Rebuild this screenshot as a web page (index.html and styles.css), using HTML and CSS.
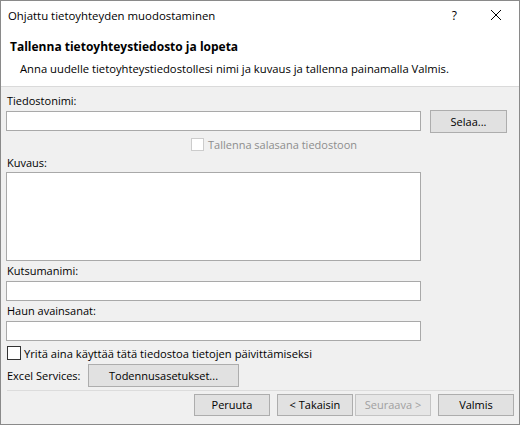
FILE: index.html
```html
<!DOCTYPE html>
<html>
<head>
<meta charset="utf-8">
<link rel="stylesheet" href="styles.css">
</head>
<body>
<div class="window">
  <div class="titlebar">
    <span class="title">Ohjattu tietoyhteyden muodostaminen</span>
    <span class="help">?</span>
    <svg class="close" width="12" height="12" viewBox="0 0 12 12"><path d="M1 1 L11 11 M11 1 L1 11" stroke="#000" stroke-width="1" fill="none"/></svg>
  </div>
  <div class="header">
    <div class="heading">Tallenna tietoyhteystiedosto ja lopeta</div>
    <div class="subtitle">Anna uudelle tietoyhteystiedostollesi nimi ja kuvaus ja tallenna painamalla Valmis.</div>
  </div>
  <div class="content">
    <div class="label l-file">Tiedostonimi:</div>
    <div class="row-file">
      <div class="input"></div>
      <div class="btn btn-browse">Selaa...</div>
    </div>
    <div class="row-pass">
      <span class="check disabled"></span>
      <span class="pass-text">Tallenna salasana tiedostoon</span>
    </div>
    <div class="label">Kuvaus:</div>
    <div class="textarea"></div>
    <div class="label l-after">Kutsumanimi:</div>
    <div class="input single"></div>
    <div class="label l-after2">Haun avainsanat:</div>
    <div class="input single"></div>
    <div class="row-always">
      <span class="check"></span>
      <span class="always-text">Yritä aina käyttää tätä tiedostoa tietojen päivittämiseksi</span>
    </div>
    <div class="row-excel">
      <span class="excel-label">Excel Services:</span>
      <div class="btn btn-auth">Todennusasetukset...</div>
    </div>
  </div>
  <div class="separator"></div>
  <div class="footer">
    <div class="btn fbtn">Peruuta</div>
    <div class="btn fbtn back">&lt; Takaisin</div>
    <div class="btn fbtn next disabled">Seuraava &gt;</div>
    <div class="btn fbtn finish">Valmis</div>
  </div>
</div>
</body>
</html>
```

FILE: styles.css
```css
html, body {
  margin: 0;
  padding: 0;
}
body {
  font-family: "Open Sans", "Noto Sans", sans-serif;
  font-size: 11px;
  color: #000;
  background: #fff;
}
.window {
  width: 520px;
  height: 425px;
  box-sizing: border-box;
  border: 1px solid #8a8a8a;
  background: #f0f0f0;
  display: flex;
  flex-direction: column;
}
.titlebar {
  height: 28px;
  background: #fff;
  display: flex;
  align-items: center;
  padding-left: 7px;
}
.title {
  flex: 1;
  font-size: 11.4px;
}
.help {
  font-size: 12px;
  margin-right: 33px;
}
.close {
  margin-right: 17px;
}
.header {
  height: 57px;
  background: #fff;
  border-bottom: 1px solid #dadada;
  padding-left: 9px;
}
.heading {
  font-weight: bold;
  font-size: 12px;
  margin-top: 9px;
  line-height: 18px;
}
.subtitle {
  margin-top: 5px;
  margin-left: 10px;
  line-height: 16px;
  font-size: 11.25px;
}
.content {
  padding-left: 5px;
  display: flex;
  flex-direction: column;
}
.label {
  line-height: 16px;
  height: 16px;
  padding-left: 1px;
}
.l-file {
  margin-top: 6px;
}
.row-file {
  display: flex;
  align-items: flex-start;
  margin-top: 1px;
}
.input {
  width: 415px;
  height: 20px;
  box-sizing: border-box;
  background: #fff;
  border: 1px solid #a9a9a9;
}
.row-file .input {
  margin-top: 1px;
}
.single {
  margin-top: 2px;
}
.btn {
  box-sizing: border-box;
  background: #e1e1e1;
  border: 1px solid #adadad;
  display: flex;
  align-items: center;
  justify-content: center;
  line-height: 16px;
}
.btn-browse {
  width: 77px;
  height: 23px;
  margin-left: 9px;
}
.row-pass {
  display: flex;
  align-items: center;
  height: 18px;
  margin-top: 2px;
  padding-left: 185px;
}
.check {
  width: 13px;
  height: 13px;
  box-sizing: border-box;
  border: 1px solid #333;
  background: #fff;
  display: inline-block;
  margin-right: 4px;
}
.check.disabled {
  border-color: #cccccc;
}
.pass-text {
  color: #8d8d8d;
}
.row-pass + .label {
  margin-top: 2px;
}
.textarea {
  width: 415px;
  height: 89px;
  box-sizing: border-box;
  background: #fff;
  border: 1px solid #a9a9a9;
  margin-top: 1px;
}
.l-after {
  margin-top: 2px;
}
.l-after2 {
  margin-top: 2px;
}
.row-always {
  display: flex;
  align-items: center;
  height: 16px;
  margin-top: 4px;
  padding-left: 1px;
}
.row-always .check {
  width: 14px;
  height: 14px;
  margin-right: 3px;
}
.always-text {
  font-size: 11.2px;
}
.row-excel {
  display: flex;
  align-items: center;
  margin-top: 3px;
  padding-left: 1px;
}
.excel-label {
  width: 81px;
}
.btn-auth {
  width: 151px;
  height: 23px;
}
.separator {
  height: 1px;
  background: #dcdcdc;
  margin: 3px 5px 0 6px;
}
.footer {
  display: flex;
  justify-content: flex-end;
  padding-right: 5px;
  margin-top: 3px;
}
.fbtn {
  width: 76px;
  height: 22px;
}
.back {
  margin-left: 7px;
}
.next {
  margin-left: 2px;
}
.finish {
  margin-left: 7px;
}
.btn.disabled {
  color: #a0a0a0;
  border-color: #c4c4c4;
  background: #e6e6e6;
}
```
